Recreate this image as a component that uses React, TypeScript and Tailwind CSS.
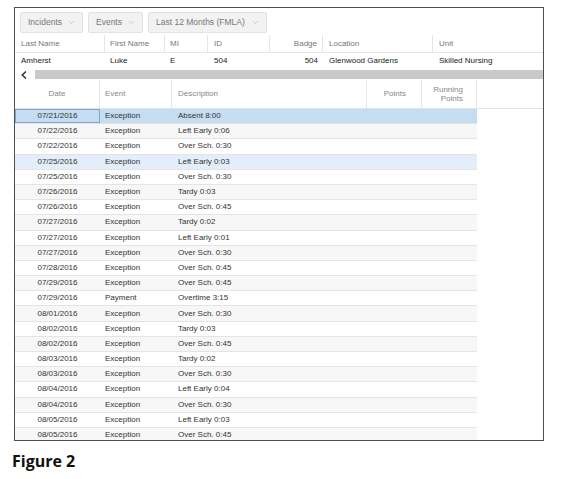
import { ChevronDown } from "lucide-react";

interface Row {
  date: string;
  event: string;
  desc: string;
}

const rows: Row[] = [
  { date: "07/21/2016", event: "Exception", desc: "Absent 8:00" },
  { date: "07/22/2016", event: "Exception", desc: "Left Early 0:06" },
  { date: "07/22/2016", event: "Exception", desc: "Over Sch. 0:30" },
  { date: "07/25/2016", event: "Exception", desc: "Left Early 0:03" },
  { date: "07/25/2016", event: "Exception", desc: "Over Sch. 0:30" },
  { date: "07/26/2016", event: "Exception", desc: "Tardy 0:03" },
  { date: "07/26/2016", event: "Exception", desc: "Over Sch. 0:45" },
  { date: "07/27/2016", event: "Exception", desc: "Tardy 0:02" },
  { date: "07/27/2016", event: "Exception", desc: "Left Early 0:01" },
  { date: "07/27/2016", event: "Exception", desc: "Over Sch. 0:30" },
  { date: "07/28/2016", event: "Exception", desc: "Over Sch. 0:45" },
  { date: "07/29/2016", event: "Exception", desc: "Over Sch. 0:45" },
  { date: "07/29/2016", event: "Payment", desc: "Overtime 3:15" },
  { date: "08/01/2016", event: "Exception", desc: "Over Sch. 0:30" },
  { date: "08/02/2016", event: "Exception", desc: "Tardy 0:03" },
  { date: "08/02/2016", event: "Exception", desc: "Over Sch. 0:45" },
  { date: "08/03/2016", event: "Exception", desc: "Tardy 0:02" },
  { date: "08/03/2016", event: "Exception", desc: "Over Sch. 0:30" },
  { date: "08/04/2016", event: "Exception", desc: "Left Early 0:04" },
  { date: "08/04/2016", event: "Exception", desc: "Over Sch. 0:30" },
  { date: "08/05/2016", event: "Exception", desc: "Left Early 0:03" },
  { date: "08/05/2016", event: "Exception", desc: "Over Sch. 0:45" },
];

function Dropdown({ label, width }: { label: string; width: string }) {
  return (
    <div
      className={`${width} h-[21px] flex items-center justify-between pl-[7px] pr-[6px] bg-[#f2f2f2] border border-[#e2e2e2] rounded-[2px] text-[8.5px] text-[#777]`}
    >
      <span>{label}</span>
      <ChevronDown size={9} strokeWidth={1.5} className="text-[#b5b5b5]" />
    </div>
  );
}

export default function App() {
  return (
    <div className="w-[563px] h-[479px] bg-white font-['Liberation_Sans',Arial,sans-serif]">
      <div className="pl-[14px] pt-[7px]">
        <div className="w-[530px] h-[434px] border border-[#4f4f4f] overflow-hidden flex flex-col">
          {/* toolbar */}
          <div className="flex gap-[5px] pl-[5px] pt-[4px] h-[27px] shrink-0">
            <Dropdown label="Incidents" width="w-[63px]" />
            <Dropdown label="Events" width="w-[55px]" />
            <Dropdown label="Last 12 Months (FMLA)" width="w-[119px]" />
          </div>

          {/* employee header */}
          <div className="flex h-[18px] shrink-0 border-b border-[#e6e6e6] text-[8px] text-[#777]">
            <div className="w-[90px] pl-[6px] flex items-center border-r border-[#e6e6e6]">Last Name</div>
            <div className="w-[60px] pl-[5px] flex items-center border-r border-[#e6e6e6]">First Name</div>
            <div className="w-[43px] pl-[5px] flex items-center border-r border-[#e6e6e6]">MI</div>
            <div className="w-[62px] pl-[6px] flex items-center border-r border-[#e6e6e6]">ID</div>
            <div className="w-[53px] pr-[5px] flex items-center justify-end border-r border-[#e6e6e6]">Badge</div>
            <div className="w-[110px] pl-[6px] flex items-center border-r border-[#e6e6e6]">Location</div>
            <div className="w-[110px] pl-[6px] flex items-center">Unit</div>
          </div>
          <div className="flex h-[16px] shrink-0 text-[8px] text-[#222]">
            <div className="w-[90px] pl-[6px] flex items-center">Amherst</div>
            <div className="w-[60px] pl-[5px] flex items-center">Luke</div>
            <div className="w-[43px] pl-[5px] flex items-center">E</div>
            <div className="w-[62px] pl-[6px] flex items-center">504</div>
            <div className="w-[53px] pr-[5px] flex items-center justify-end">504</div>
            <div className="w-[110px] pl-[6px] flex items-center">Glenwood Gardens</div>
            <div className="w-[110px] pl-[6px] flex items-center">Skilled Nursing</div>
          </div>

          {/* horizontal scrollbar */}
          <div className="flex items-center h-[11px] shrink-0">
            <div className="w-[20px] pl-[6px] flex items-center">
              <svg width="6" height="8" viewBox="0 0 6 8">
                <path d="M5 0.5 L1.2 4 L5 7.5" fill="none" stroke="#333" strokeWidth="1.5" />
              </svg>
            </div>
            <div className="flex-1 h-[9px] bg-[#c9c9c9]" />
          </div>

          {/* grid header */}
          <div className="flex h-[29px] shrink-0 border-b border-[#e3e3e3] text-[8px] text-[#888]">
            <div className="w-[85px] flex items-center justify-center border-r border-[#e6e6e6]">Date</div>
            <div className="w-[72px] pl-[5px] flex items-center border-r border-[#e6e6e6]">Event</div>
            <div className="w-[195px] pl-[6px] flex items-center border-r border-[#e6e6e6]">Description</div>
            <div className="w-[55px] pr-[15px] flex items-center justify-end border-r border-[#e6e6e6]">Points</div>
            <div className="w-[55px] pr-[13px] flex items-center justify-end text-right leading-[9px] border-r border-[#e6e6e6]">
              Running
              <br />
              Points
            </div>
          </div>

          {/* grid body */}
          <div className="w-[462px] text-[8px] text-[#333]">
            {rows.map((r, i) => {
              const bg =
                i === 0 ? "bg-[#c4ddf2]" : i === 3 ? "bg-[#e2eef9]" : i % 2 === 1 ? "bg-[#f7f7f7]" : "bg-white";
              return (
                <div key={i} className={`flex h-[15.2px] border-b border-[#e4e4e4] ${bg}`}>
                  <div
                    className={`w-[85px] flex items-center justify-center ${
                      i === 0 ? "border border-[#7da7cf]" : ""
                    }`}
                  >
                    {r.date}
                  </div>
                  <div className="w-[72px] pl-[5px] flex items-center">{r.event}</div>
                  <div className="w-[195px] pl-[6px] flex items-center">{r.desc}</div>
                  <div className="w-[55px]" />
                  <div className="w-[55px]" />
                </div>
              );
            })}
          </div>
        </div>
        <div className="mt-[10px] -ml-[2px] text-[16px] leading-[20px] font-bold text-[#111] font-['Open_Sans',sans-serif]">
          Figure 2
        </div>
      </div>
    </div>
  );
}
